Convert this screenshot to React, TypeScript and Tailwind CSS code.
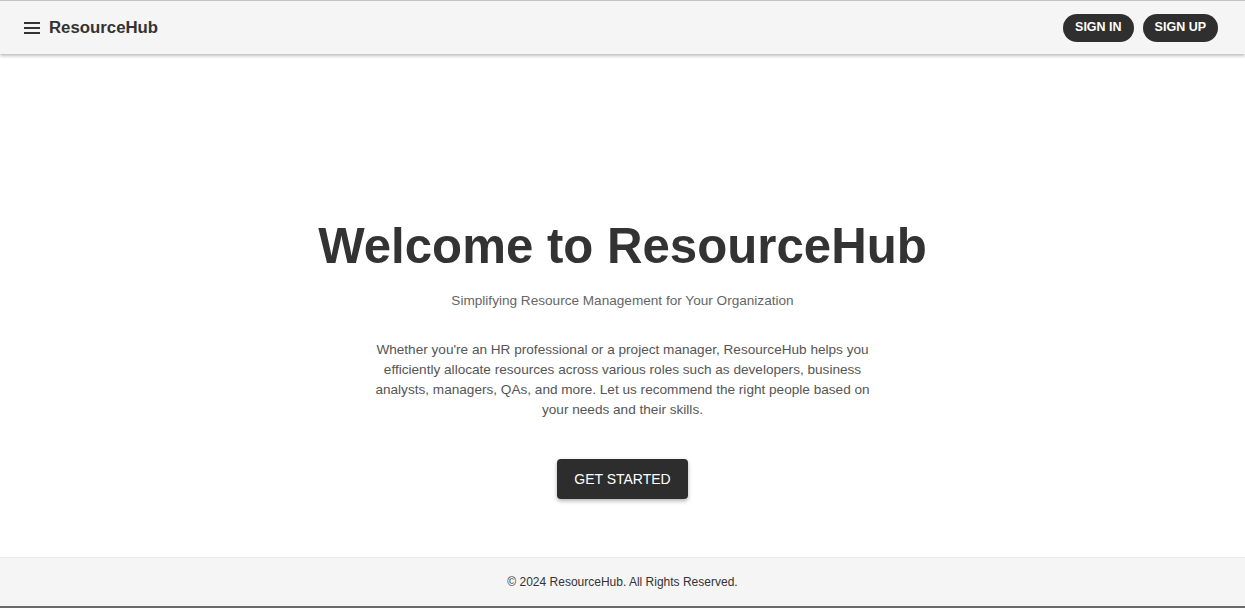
import React from 'react';

const MenuIcon = () => (
    <svg width="16" height="12" viewBox="0 0 16 12" className="text-[#333]">
        <rect x="0" y="0" width="16" height="2" fill="currentColor" />
        <rect x="0" y="5" width="16" height="2" fill="currentColor" />
        <rect x="0" y="10" width="16" height="2" fill="currentColor" />
    </svg>
);

export default function App() {
    return (
        <div className="h-screen flex flex-col bg-white font-['Liberation_Sans',Arial,sans-serif] text-[#333]">
            <header className="h-[54px] shrink-0 border-t border-[#c4c4c4] bg-[#f5f5f5] shadow-[0_2px_3px_rgba(0,0,0,0.25)] flex items-center justify-between pl-6 pr-[27px] z-10">
                <div className="flex items-center gap-[9px]">
                    <MenuIcon />
                    <span className="text-[16.8px] font-bold text-[#333]">ResourceHub</span>
                </div>
                <div className="flex items-center gap-[9px]">
                    <button className="h-7 px-3 rounded-full bg-[#2f2f2f] text-white text-[12.5px] font-semibold">SIGN IN</button>
                    <button className="h-7 px-3 rounded-full bg-[#2f2f2f] text-white text-[12.5px] font-semibold">SIGN UP</button>
                </div>
            </header>

            <main className="flex-1 flex flex-col items-center pt-[162px]">
                <h1 className="text-[49.2px] leading-[1.2] font-bold text-[#333]">Welcome to ResourceHub</h1>
                <p className="mt-[16px] text-[13.6px] leading-5 text-[#666]">Simplifying Resource Management for Your Organization</p>
                <p className="mt-[29px] max-w-[500px] text-center text-[13.6px] leading-5 text-[#555]">
                    Whether you're an HR professional or a project manager, ResourceHub helps you efficiently allocate resources across various roles such as developers, business analysts, managers, QAs, and more. Let us recommend the right people based on your needs and their skills.
                </p>
                <button className="mt-[39px] h-10 px-[17px] rounded bg-[#2d2d2d] text-white text-[14px] shadow-[0_2px_4px_rgba(0,0,0,0.3)]">GET STARTED</button>
            </main>

            <footer className="h-[51px] shrink-0 bg-[#f5f5f5] border-t border-[#ececec] border-b-2 border-b-[#6b6b6b] flex items-center justify-center">
                <p className="text-[12px] text-[#333]">© 2024 ResourceHub. All Rights Reserved.</p>
            </footer>
        </div>
    );
}
